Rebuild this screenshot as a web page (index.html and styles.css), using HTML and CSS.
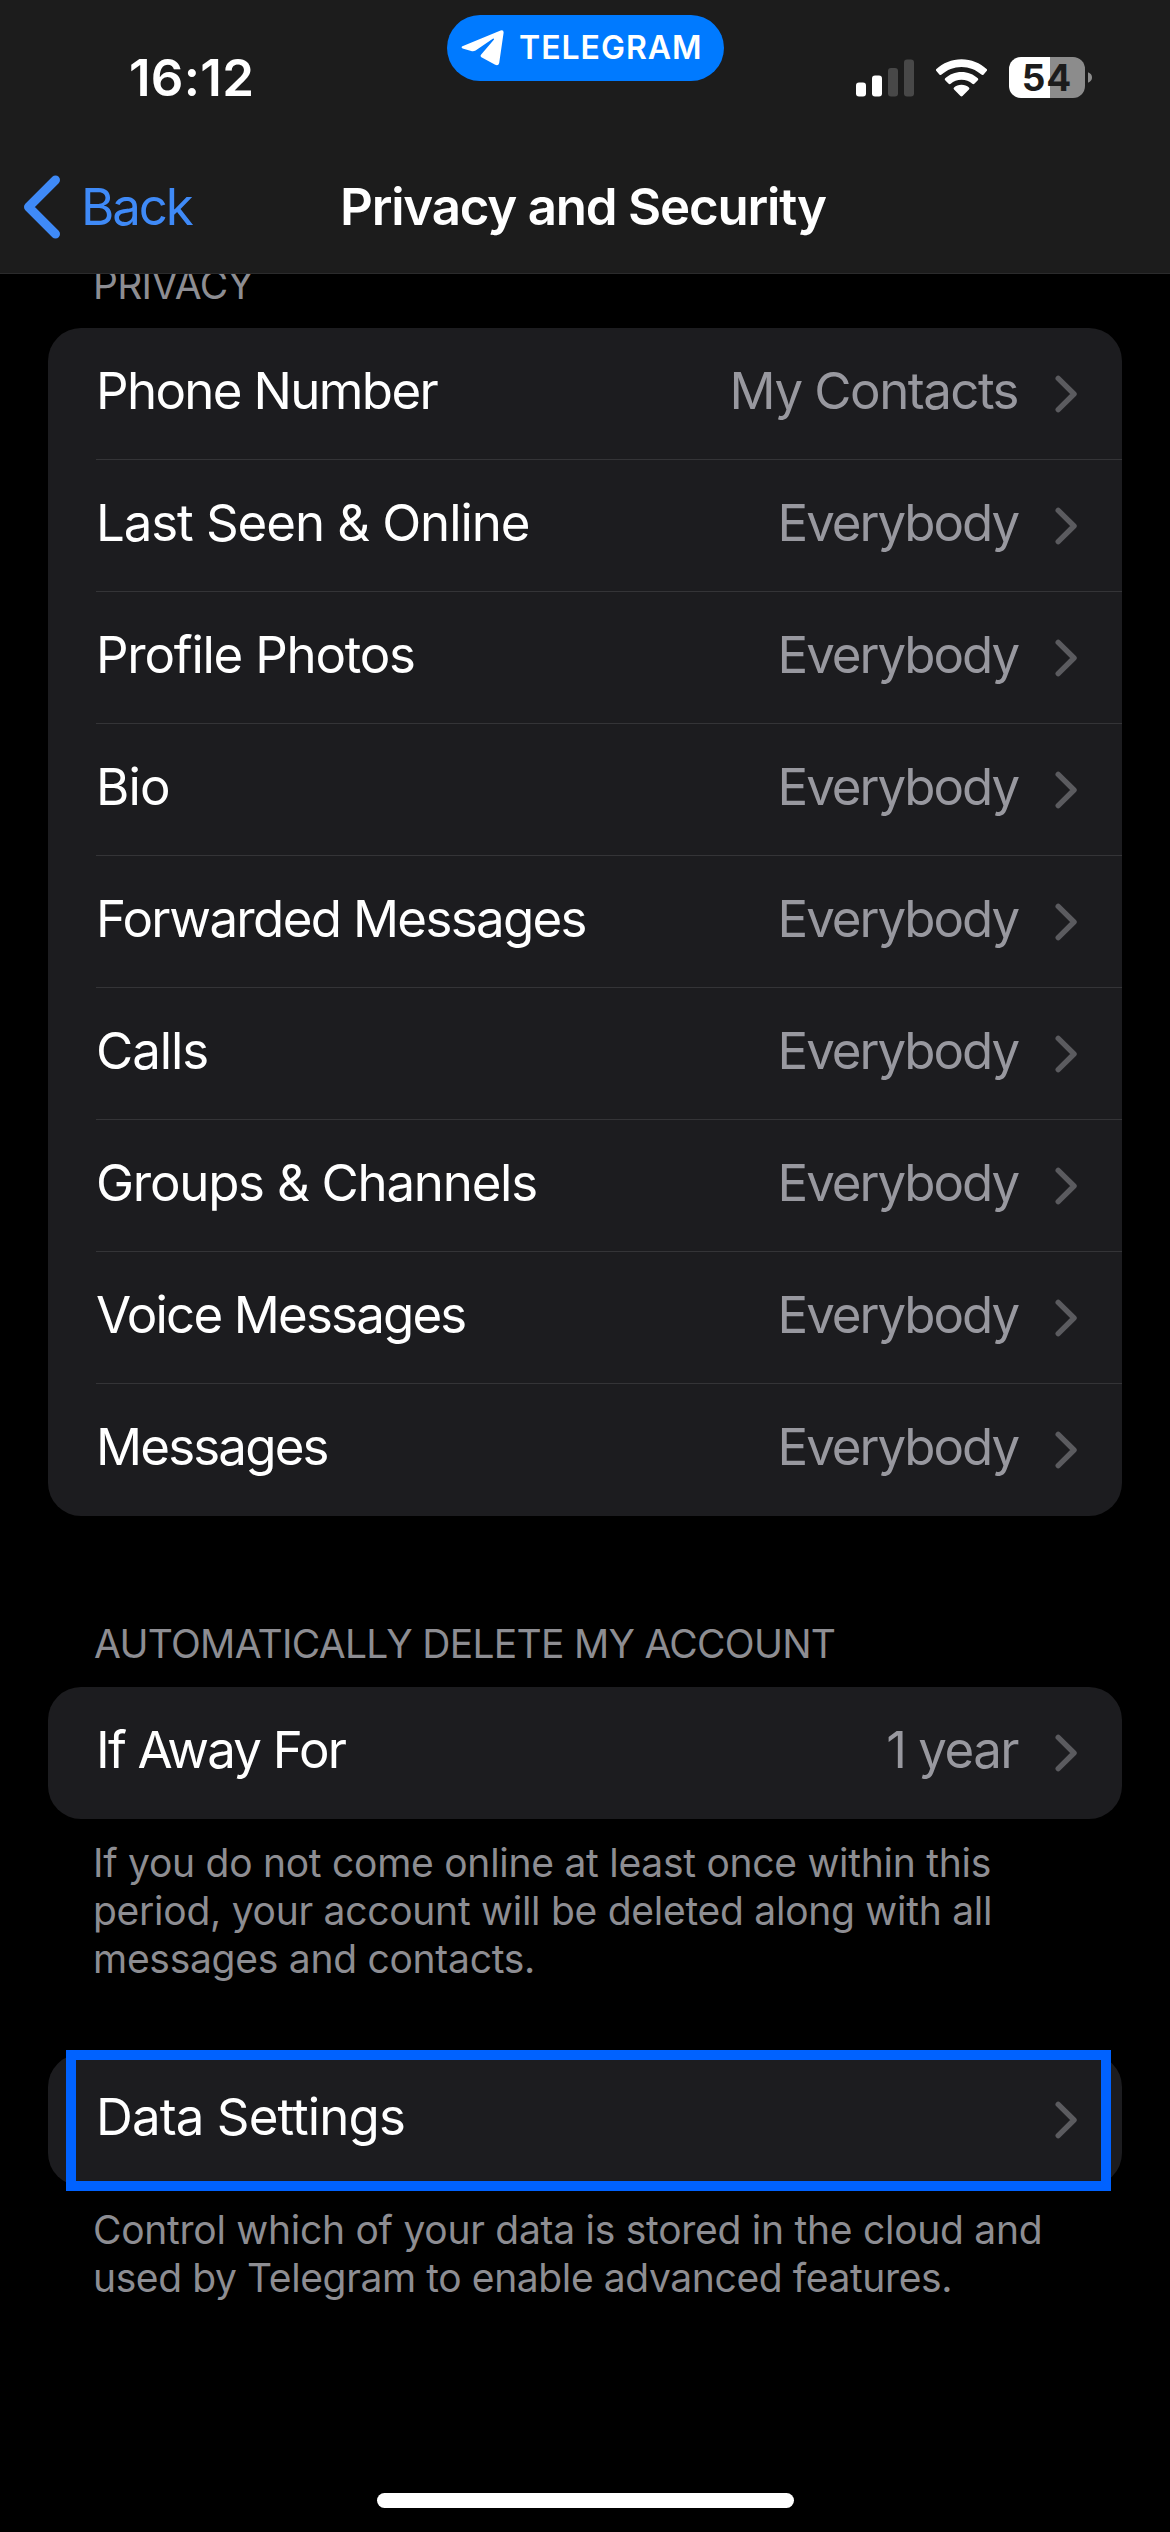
FILE: index.html
```html
<!DOCTYPE html>
<html lang="en">
<head>
<meta charset="utf-8">
<meta name="viewport" content="width=1170">
<title>Privacy and Security</title>
<link rel="stylesheet" href="styles.css">
</head>
<body>
<svg class="defs" aria-hidden="true">
  <symbol id="chevron" viewBox="0 0 23 38">
    <path d="M3.2 3.4 L19 19 L3.2 34.6" fill="none" stroke="currentColor" stroke-width="5.4" stroke-linecap="round" stroke-linejoin="round"/>
  </symbol>
</svg>

<header class="topbar">
  <div class="status">
    <span class="time">16:12</span>
    <span class="pill">
      <svg class="plane" viewBox="0 0 44 36"><path fill="#fff" d="M1.4 16.2 L39.6 .6 Q42.8 -.4 42.6 2.8 L38.2 33 Q37.4 36.2 34.2 34.8 L20.4 27.2 Q18.8 26 20.2 24.4 L33 9.4 Q33.2 8.2 31.8 8.8 L14.6 20.4 Q12.6 21.6 10.2 21 L1.6 18.4 Q-.4 17.2 1.4 16.2 Z"/></svg>
      <span>TELEGRAM</span>
    </span>
    <span class="indicators">
      <svg class="signal" viewBox="0 0 58 38">
        <rect x="0" y="23.5" width="10" height="14" rx="3" fill="#fff"/>
        <rect x="16" y="16.5" width="10" height="21" rx="3" fill="#fff"/>
        <rect x="32" y="9" width="10" height="28.500" rx="3" fill="#484848"/>
        <rect x="48" y="0.500" width="10" height="37" rx="3" fill="#484848"/>
      </svg>
      <svg class="wifi" viewBox="0 0 50 37">
        <path fill="#fff" d="M25 0 C34.500 0 43.400 3.700 49.600 9.600 Q50.600 10.700 49.600 11.700 L46.500 15.200 Q45.500 16 44.500 15.100 C39.300 10.300 32.400 7.600 25 7.600 C17.600 7.600 10.700 10.300 5.500 15.100 Q4.500 16 3.500 15.200 L.4 11.700 Q-.6 10.700 .4 9.600 C6.600 3.700 15.500 0 25 0 Z"/>
        <path fill="#fff" d="M25 12.600 C31.200 12.600 36.800 15 41 18.800 Q42 19.800 41 20.800 L37.600 24.200 Q36.600 25 35.600 24.200 C32.800 21.700 29.100 20.200 25 20.200 C20.900 20.200 17.200 21.700 14.400 24.200 Q13.400 25 12.400 24.200 L9 20.800 Q8 19.800 9 18.800 C13.200 15 18.800 12.600 25 12.600 Z"/>
        <path fill="#fff" d="M25 25.200 C27.900 25.200 30.400 26.200 32.300 27.800 Q33.300 28.800 32.300 29.800 L26 36.200 Q25 37 24 36.200 L17.700 29.800 Q16.700 28.800 17.700 27.800 C19.600 26.200 22.100 25.200 25 25.200 Z"/>
      </svg>
      <span class="battery">54</span>
      <svg class="nub" viewBox="0 0 5 13"><path d="M0 0 Q5 2 5 6.500 T0 13 Z" fill="#8c8c8c"/></svg>
    </span>
  </div>
  <nav class="nav">
    <a class="back">
      <svg class="back-icon" viewBox="0 0 37 64"><path d="M32 5 L5 32 L32 59" fill="none" stroke="currentColor" stroke-width="9" stroke-linecap="round" stroke-linejoin="round"/></svg>
      <span>Back</span>
    </a>
    <h1 class="title">Privacy and Security</h1>
  </nav>
</header>

<main>
  <section>
    <h2 class="heading heading-first">PRIVACY</h2>
    <div class="card">
      <div class="row"><span class="label t16">Phone Number</span><span class="value t15">My Contacts</span><svg class="chev"><use href="#chevron"/></svg></div>
      <div class="row"><span class="label t10">Last Seen &amp; Online</span><span class="value">Everybody</span><svg class="chev"><use href="#chevron"/></svg></div>
      <div class="row"><span class="label t12">Profile Photos</span><span class="value">Everybody</span><svg class="chev"><use href="#chevron"/></svg></div>
      <div class="row"><span class="label t08">Bio</span><span class="value">Everybody</span><svg class="chev"><use href="#chevron"/></svg></div>
      <div class="row"><span class="label t16">Forwarded Messages</span><span class="value">Everybody</span><svg class="chev"><use href="#chevron"/></svg></div>
      <div class="row"><span class="label t10">Calls</span><span class="value">Everybody</span><svg class="chev"><use href="#chevron"/></svg></div>
      <div class="row"><span class="label t12">Groups &amp; Channels</span><span class="value">Everybody</span><svg class="chev"><use href="#chevron"/></svg></div>
      <div class="row"><span class="label t18">Voice Messages</span><span class="value">Everybody</span><svg class="chev"><use href="#chevron"/></svg></div>
      <div class="row"><span class="label t18">Messages</span><span class="value">Everybody</span><svg class="chev"><use href="#chevron"/></svg></div>
    </div>
  </section>

  <section>
    <h2 class="heading">AUTOMATICALLY DELETE MY ACCOUNT</h2>
    <div class="card">
      <div class="row"><span class="label t18">If Away For</span><span class="value t15">1 year</span><svg class="chev"><use href="#chevron"/></svg></div>
    </div>
    <p class="note">If you do not come online at least once within this<br>period, your account will be deleted along with all<br>messages and contacts.</p>
  </section>

  <section class="data">
    <div class="card">
      <div class="row"><span class="label t08">Data Settings</span><svg class="chev"><use href="#chevron"/></svg></div>
      <div class="highlight"></div>
    </div>
    <p class="note">Control which of your data is stored in the cloud and<br><span class="tight">used by Telegram to enable advanced features.</span></p>
  </section>
</main>

<footer class="home"><span class="home-bar"></span></footer>
</body>
</html>
```
FILE: styles.css
```css
* { box-sizing: border-box; }

body {
  margin: 0;
  width: 1170px;
  height: 2532px;
  overflow: hidden;
  display: flex;
  flex-direction: column;
  background: #000;
  color: #fff;
  font-family: Inter, "Liberation Sans", sans-serif;
  font-size: 51px;
  line-height: 62px;
}

h1, h2, p { margin: 0; font-weight: 400; }
svg { display: block; flex: none; }
.defs { width: 0; height: 0; position: absolute; }

/* Status bar and navigation */
.topbar {
  flex: none;
  height: 274px;
  position: relative;
  z-index: 1;
  background: #1c1c1c;
  border-bottom: 1px solid #2b2b2c;
}

.status {
  height: 155px;
  display: grid;
  grid-template-columns: 447px 277px 1fr;
  align-items: center;
}

.time {
  padding-left: 129px;
  font-weight: 600;
  letter-spacing: .3px;
}

.pill {
  align-self: start;
  margin-top: 15px;
  height: 66px;
  padding-left: 14px;
  display: flex;
  align-items: center;
  gap: 14px;
  border-radius: 33px;
  background: #007aff;
  font-size: 32px;
  font-weight: 600;
  letter-spacing: 1px;
  line-height: 40px;
}

.plane { width: 44px; height: 36px; }

.indicators {
  padding-left: 132px;
  display: flex;
  align-items: center;
}

.signal { width: 58px; height: 38px; margin-right: 22px; }
.wifi { width: 51px; height: 38px; margin-right: 22px; }

.battery {
  width: 76px;
  height: 41px;
  border-radius: 12px;
  background: linear-gradient(90deg, #fff 41px, #8c8c8c 41px);
  color: #1c1c1c;
  font-size: 37px;
  font-weight: 700;
  line-height: 42px;
  letter-spacing: 1px;
  text-align: center;
}

.nub { width: 4px; height: 13px; margin-left: 3px; }

.nav {
  height: 103px;
  display: grid;
  grid-template-columns: 340px 1fr;
  align-items: center;
}

.back {
  padding-left: 23px;
  display: flex;
  align-items: center;
  gap: 20px;
  color: #3f8af7;
  letter-spacing: -2.1px;
}

.back-icon { width: 38px; height: 64px; }

.title {
  font-size: 51px;
  font-weight: 600;
  letter-spacing: -1.21px;
}

/* Grouped lists */
.heading {
  padding: 104px 94px 19px;
  font-size: 39px;
  line-height: 48px;
  letter-spacing: -.72px;
  color: #8d8d92;
}

.heading-first {
  margin-top: -13px;
  padding-top: 0;
  padding-left: 93px;
}

.card {
  position: relative;
  margin: 0 48px;
  border-radius: 33px;
  background: #1c1c1f;
}

.row {
  height: 132px;
  margin-left: 48px;
  padding-right: 44px;
  display: flex;
  align-items: center;
  border-bottom: 1px solid #343437;
}

.row:last-of-type,
.data .row { border-bottom-color: transparent; }

.label {
  padding-bottom: 6px;
  flex: 1;
}

.value {
  padding-bottom: 6px;
  margin-right: -2px;
  color: #98989f;
  letter-spacing: -2.05px;
}

.t08 { letter-spacing: -.9px; }
.t10 { letter-spacing: -1.09px; }
.t12 { letter-spacing: -1.25px; }
.t15 { letter-spacing: -1.52px; }
.t16 { letter-spacing: -1.66px; }
.t18 { letter-spacing: -1.82px; }

.chev {
  width: 23px;
  height: 38px;
  margin-left: 39px;
  color: #5b5b5f;
}

.note {
  padding: 20px 93px 0;
  font-size: 39px;
  line-height: 48px;
  letter-spacing: -.27px;
  color: #8d8d92;
}

.tight { letter-spacing: -.39px; }

.data { margin-top: 71px; }

.highlight {
  position: absolute;
  left: 18px;
  top: -4px;
  width: 1045px;
  height: 141px;
  border: 10px solid #0062ff;
}

.home {
  margin-top: auto;
  padding-bottom: 24px;
  display: flex;
  justify-content: center;
}

.home-bar {
  width: 417px;
  height: 15px;
  border-radius: 8px;
  background: #fff;
}
```
